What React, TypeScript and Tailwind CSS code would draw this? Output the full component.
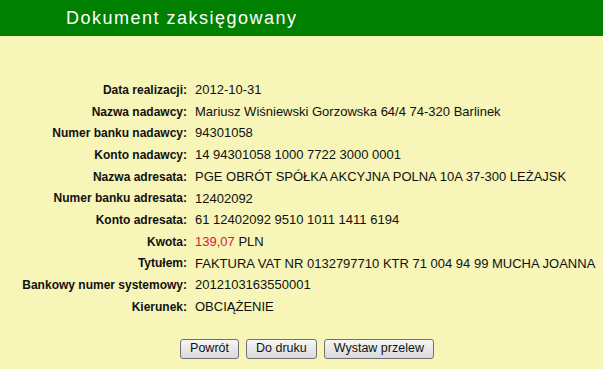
const rows: [string, React.ReactNode][] = [
  ['Data realizacji:', '2012-10-31'],
  ['Nazwa nadawcy:', 'Mariusz Wiśniewski Gorzowska 64/4 74-320 Barlinek'],
  ['Numer banku nadawcy:', '94301058'],
  ['Konto nadawcy:', '14 94301058 1000 7722 3000 0001'],
  ['Nazwa adresata:', 'PGE OBRÓT SPÓŁKA AKCYJNA POLNA 10A 37-300 LEŻAJSK'],
  ['Numer banku adresata:', '12402092'],
  ['Konto adresata:', '61 12402092 9510 1011 1411 6194'],
  [
    'Kwota:',
    <>
      <span className="text-[#dc143c]">139,07</span> PLN
    </>,
  ],
  ['Tytułem:', 'FAKTURA VAT NR 0132797710 KTR 71 004 94 99 MUCHA JOANNA'],
  ['Bankowy numer systemowy:', '2012103163550001'],
  ['Kierunek:', 'OBCIĄŻENIE'],
]

function Button({ children }: { children: React.ReactNode }) {
  return (
    <button className="h-[20px] px-[9px] rounded-[3px] border border-[#707070] bg-gradient-to-b from-[#f6f6f6] to-[#dadada] text-[12.5px] leading-none text-[#111]">
      {children}
    </button>
  )
}

export default function App() {
  return (
    <div className="w-[603px] h-[369px] bg-[#f7f5b8] font-['Liberation_Sans',Arial,sans-serif] overflow-hidden">
      <div className="h-[36px] bg-[#008000] flex items-center pl-[66px]">
        <h1 className="text-white text-[18px] tracking-[1.5px] leading-none">Dokument zaksięgowany</h1>
      </div>
      <div className="mt-[43px] flex flex-col">
        {rows.map(([label, value]) => (
          <div key={label} className="h-[21.7px] flex items-center">
            <div className="w-[187px] text-right font-bold text-[12px] text-[#111]">{label}</div>
            <div className="pl-[8px] text-[13px] text-[#111] whitespace-nowrap">{value}</div>
          </div>
        ))}
      </div>
      <div className="mt-[21px] flex justify-center gap-[7px] pl-[11px]">
        <Button>Powrót</Button>
        <Button>Do druku</Button>
        <Button>Wystaw przelew</Button>
      </div>
    </div>
  )
}
